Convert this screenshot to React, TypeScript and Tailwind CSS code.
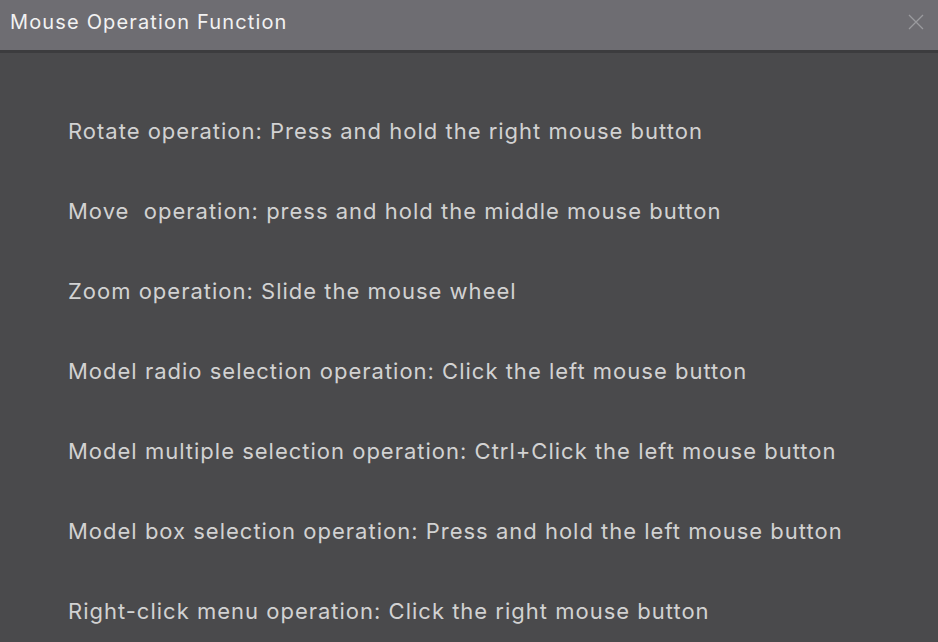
import React from "react";

const lines = [
  "Rotate operation: Press and hold the right mouse button",
  "Move\u00a0 operation: press and hold the middle mouse button",
  "Zoom operation: Slide the mouse wheel",
  "Model radio selection operation: Click the left mouse button",
  "Model multiple selection operation: Ctrl+Click the left mouse button",
  "Model box selection operation: Press and hold the left mouse button",
  "Right-click menu operation: Click the right mouse button",
];

export default function App() {
  return (
    <div className="w-[938px] h-[642px] bg-[#4a4a4c] flex flex-col overflow-hidden" style={{ fontFamily: "Inter, 'Noto Sans', sans-serif" }}>
      <div className="h-[50px] bg-[#6e6d72] flex items-center justify-between pl-[10px] pr-[14px] border-b-[3px] border-[#3c3c3e] box-content">
        <span className="text-[20px] tracking-[1.15px] text-[#f2f2f2] mb-[6px]">Mouse Operation Function</span>
        <svg width="16" height="16" viewBox="0 0 16 16" className="mb-[6px]">
          <path d="M1 1 L15 15 M15 1 L1 15" stroke="#9a9a9e" strokeWidth="1.3" />
        </svg>
      </div>
      <div className="flex flex-col pl-[68px] pt-[65px] gap-[53px]">
        {lines.map((l) => (
          <div key={l} className="text-[22px] tracking-[1px] leading-[27px] text-[#d2d2d2] whitespace-pre">{l}</div>
        ))}
      </div>
    </div>
  );
}
